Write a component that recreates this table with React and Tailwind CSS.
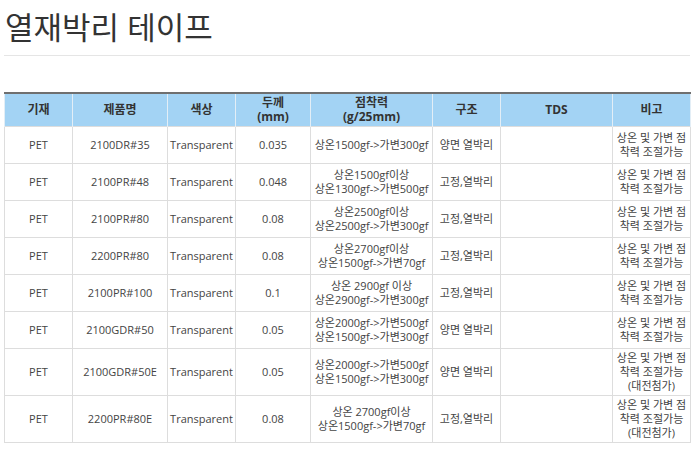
import React from 'react';

const rows = [
  ['PET', '2100DR#35', 'Transparent', '0.035', ['상온1500gf->가변300gf'], '양면 열박리', false],
  ['PET', '2100PR#48', 'Transparent', '0.048', ['상온1500gf이상', '상온1300gf->가변500gf'], '고정,열박리', false],
  ['PET', '2100PR#80', 'Transparent', '0.08', ['상온2500gf이상', '상온2500gf->가변300gf'], '고정,열박리', false],
  ['PET', '2200PR#80', 'Transparent', '0.08', ['상온2700gf이상', '상온1500gf->가변70gf'], '고정,열박리', false],
  ['PET', '2100PR#100', 'Transparent', '0.1', ['상온 2900gf 이상', '상온2900gf->가변300gf'], '고정,열박리', false],
  ['PET', '2100GDR#50', 'Transparent', '0.05', ['상온2000gf->가변500gf', '상온1500gf->가변300gf'], '양면 열박리', false],
  ['PET', '2100GDR#50E', 'Transparent', '0.05', ['상온2000gf->가변500gf', '상온1500gf->가변300gf'], '양면 열박리', true],
  ['PET', '2200PR#80E', 'Transparent', '0.08', ['상온 2700gf이상', '상온1500gf->가변70gf'], '고정,열박리', true],
];

const th = 'border-x border-[#e3eef6] font-bold text-[#333] text-center align-middle leading-[14px] p-0';
const td = 'border border-[#dddddd] text-center align-middle leading-[14px] px-0 py-[2px] whitespace-nowrap';

export default function App() {
  return (
    <div
      className="w-[694px] h-[449px] bg-white overflow-hidden text-[#444]"
      style={{ fontFamily: '"Open Sans", "Noto Sans CJK KR", sans-serif' }}
    >
      <div className="px-[4px]">
        <h1 className="h-[56px] pl-[1px] pt-[7px] text-[31px] leading-[40px] font-normal text-[#333] border-b border-[#e5e5e5] w-[686px]">
          열재박리 테이프
        </h1>
        <table className="mt-[36px] w-[686px] table-fixed border-collapse text-[11px]">
          <colgroup>
            <col className="w-[68px]" />
            <col className="w-[95px]" />
            <col className="w-[68px]" />
            <col className="w-[75px]" />
            <col className="w-[122px]" />
            <col className="w-[68px]" />
            <col className="w-[112px]" />
            <col className="w-[78px]" />
          </colgroup>
          <thead>
            <tr className="h-[33px] bg-[#a3d3f4] border-t-2 border-[#6f6f6f] text-[12px]">
              <th className={th}>기재</th>
              <th className={th}>제품명</th>
              <th className={th}>색상</th>
              <th className={th}>
                <div>두께</div>
                <div>(mm)</div>
              </th>
              <th className={th}>
                <div>점착력</div>
                <div>(g/25mm)</div>
              </th>
              <th className={th}>구조</th>
              <th className={th}>TDS</th>
              <th className={th}>비고</th>
            </tr>
          </thead>
          <tbody>
            {rows.map((r, i) => (
              <tr key={i} className={r[6] ? 'h-[45px]' : 'h-[37px]'}>
                <td className={td}>{r[0]}</td>
                <td className={td}>{r[1]}</td>
                <td className={td}>{r[2]}</td>
                <td className={td}>{r[3]}</td>
                <td className={td}>
                  {r[4].map((l, j) => (
                    <div key={j}>{l}</div>
                  ))}
                </td>
                <td className={td}>{r[5]}</td>
                <td className={td}></td>
                <td className={td + ' overflow-hidden'}>
                  <div>상온 및 가변 점</div>
                  <div>착력 조절가능</div>
                  {r[6] && <div>(대전첨가)</div>}
                </td>
              </tr>
            ))}
          </tbody>
        </table>
      </div>
    </div>
  );
}
